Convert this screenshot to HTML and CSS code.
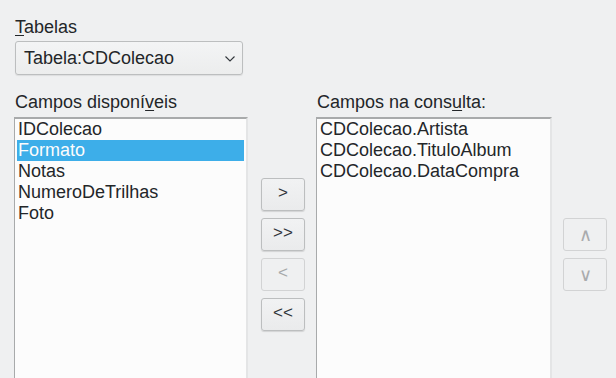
FILE: index.html
```html
<!DOCTYPE html>
<html lang="pt">
<head>
  <meta charset="UTF-8">
  <title>Assistente de consulta</title>
  <link rel="stylesheet" href="styles.css">
</head>
<body>
  <div class="page">
    <div class="table-pick">
      <div class="label"><u>T</u>abelas</div>
      <div class="select">
        <span>Tabela:CDColecao</span>
        <svg class="chevron" width="10" height="6" viewBox="0 0 10 6"><path d="M0.5 0.5 L5 5 L9.5 0.5" fill="none" stroke="#31363b" stroke-width="1.1"/></svg>
      </div>
    </div>

    <div class="fields">
      <div class="col">
        <div class="label">Campos dispon&iacute;<u>v</u>eis</div>
        <div class="listbox">
          <div class="item">IDColecao</div>
          <div class="item selected">Formato</div>
          <div class="item">Notas</div>
          <div class="item">NumeroDeTrilhas</div>
          <div class="item">Foto</div>
        </div>
      </div>

      <div class="move-buttons">
        <button>&gt;</button>
        <button>&gt;&gt;</button>
        <button disabled>&lt;</button>
        <button>&lt;&lt;</button>
      </div>

      <div class="col">
        <div class="label">Campos na cons<u>u</u>lta:</div>
        <div class="listbox">
          <div class="item">CDColecao.Artista</div>
          <div class="item">CDColecao.TituloAlbum</div>
          <div class="item">CDColecao.DataCompra</div>
        </div>
      </div>

      <div class="order-buttons">
        <button disabled class="arrow">&and;</button>
        <button disabled class="arrow">&or;</button>
      </div>
    </div>
  </div>
</body>
</html>
```

FILE: styles.css
```css
html, body { margin: 0; height: 100%; overflow: hidden; }
body { background: #eff0f1; color: #232629; font-family: "Liberation Sans", Arial, sans-serif; font-size: 18px; }
.page { padding: 17px 0 0 14px; }
.label { line-height: 20px; padding-left: 1px; }
.label u { text-decoration-thickness: 1px; text-underline-offset: 2px; }

.table-pick { margin-bottom: 17px; }
.table-pick .label { margin-bottom: 4px; }
.select { margin-left: 1px; display: flex; align-items: center; justify-content: space-between; padding: 0 7px 0 8px; box-sizing: border-box; width: 228px; height: 34px;
  border: 1px solid #bcbebf; border-radius: 3px; background: linear-gradient(#f3f4f5, #eceded); box-shadow: 0 1px 1px rgba(0,0,0,0.08); }
.chevron { margin-top: 2px; }

.fields { display: flex; align-items: flex-start; }
.col .label { margin-bottom: 5px; }
.listbox { width: 234px; height: 261px; box-sizing: border-box; background: #fcfcfc; padding: 0 2px;
  border-top: 2px solid #a8aaab; border-left: 1px solid #a8aaab; border-right: 2px solid #e4e5e6; }
.col:nth-child(3) .listbox { width: 236px; }
.item { height: 21px; line-height: 21px; padding-left: 1px; white-space: nowrap; }
.item.selected { background: #3daee9; color: #fcfcfc; }

.move-buttons { width: 68px; box-sizing: border-box; display: flex; flex-direction: column; gap: 7px; padding: 86px 0 0 13px; }
.order-buttons { display: flex; flex-direction: column; gap: 7px; padding: 126px 0 0 11px; }

button { width: 44px; height: 33px; font-family: inherit; font-size: 17px; color: #31363b; padding: 0 0 3px; cursor: pointer;
  border: 1px solid #bcbebf; border-radius: 3px; background: linear-gradient(#f1f2f3, #eaebec); box-shadow: 0 1px 1px rgba(0,0,0,0.12); }
button:disabled { color: #a6a8aa; border-color: #d2d3d4; box-shadow: none; background: #eff0f1; }
button.arrow { font-family: "DejaVu Sans", sans-serif; font-size: 18px; font-weight: 200; padding-bottom: 0; color: #a9abad; }
```
